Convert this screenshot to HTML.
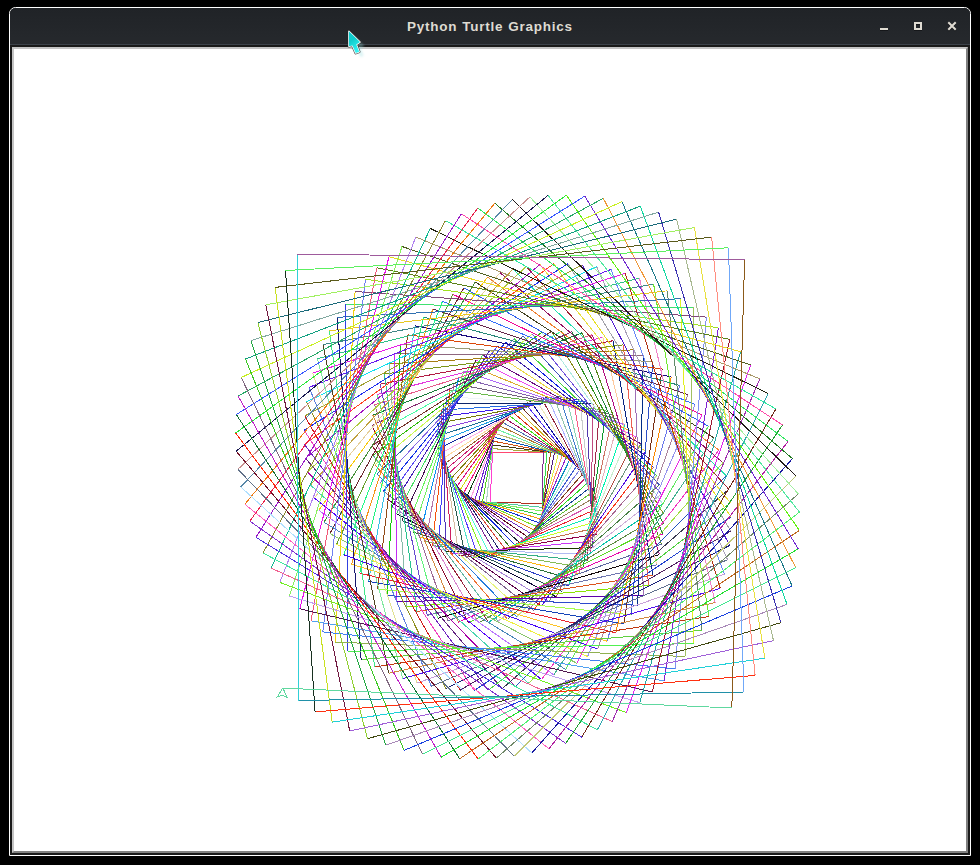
<!DOCTYPE html>
<html><head><meta charset="utf-8"><title>Python Turtle Graphics</title>
<style>
html,body{margin:0;padding:0;background:#000;}
body{width:980px;height:865px;position:relative;overflow:hidden;font-family:"Liberation Sans",sans-serif;}
.win{position:absolute;left:9px;top:7px;width:960px;height:847px;border:1px solid #fff;border-radius:6.5px 6.5px 0 0;background:#1a1a1a;overflow:hidden;}
.tb{position:absolute;left:0;top:0;width:960px;height:36px;background:linear-gradient(#202327,#26292d);}
.tbl{position:absolute;left:0;top:36px;width:960px;height:1px;background:#3c424a;}
.title{position:absolute;left:0;top:0;width:960px;height:36px;line-height:38px;text-align:center;color:#dfdbd2;font-weight:bold;font-size:13.5px;letter-spacing:0.75px;word-spacing:0.5px;}
.frame{position:absolute;left:2px;top:39px;width:952px;height:802px;border-style:solid;border-width:2px;border-color:#c4c4c4 #808080 #808080 #c4c4c4;background:#fff;}
.cv{position:absolute;left:0;top:0;}
.ic{position:absolute;}
</style></head><body>
<div class="win">
<div class="tb"></div><div class="tbl"></div>
<div class="title"><span id="tt">Python Turtle Graphics</span></div>
<svg class="ic" style="left:860px;top:8px" width="100" height="28" viewBox="870 16 100 28">
<g transform="translate(0,1)" opacity="0.6"><rect x="880" y="28" width="8" height="2" fill="#0c0d0f"/><rect x="915" y="23" width="6" height="6" fill="none" stroke="#0c0d0f" stroke-width="2"/><path d="M949 23L955 29M955 23L949 29" stroke="#0c0d0f" stroke-width="2" stroke-linecap="square" fill="none"/></g>
<rect x="880" y="28" width="8" height="2" fill="#dfdbd2"/>
<rect x="915" y="23" width="6" height="6" fill="none" stroke="#dfdbd2" stroke-width="2"/>
<path d="M949 23L955 29M955 23L949 29" stroke="#dfdbd2" stroke-width="2" stroke-linecap="square" fill="none"/>
</svg>
<div class="frame">
<svg class="cv" width="952" height="802" viewBox="14 49 952 802" shape-rendering="crispEdges" fill="none" stroke-width="1">
<path d="M492.9 452.4L543.2 452.4" stroke="#ff4870"/>
<path d="M543.2 452.4L542.4 503.7" stroke="#803090"/>
<path d="M542.4 503.7L490.2 502.0" stroke="#b03020"/>
<path d="M490.2 502.0L492.7 448.7" stroke="#ff40d0"/>
<path d="M492.7 448.7L546.9 452.2" stroke="#a8a840"/>
<path d="M546.9 452.2L542.5 507.3" stroke="#30e050"/>
<path d="M542.5 507.3L486.4 502.0" stroke="#50c8a0"/>
<path d="M486.4 502.0L492.8 445.0" stroke="#b0d0c8"/>
<path d="M492.8 445.0L550.7 452.4" stroke="#483810"/>
<path d="M550.7 452.4L542.2 511.1" stroke="#a05810"/>
<path d="M542.2 511.1L482.6 501.6" stroke="#80f060"/>
<path d="M482.6 501.6L493.3 441.2" stroke="#50d020"/>
<path d="M493.3 441.2L554.5 453.0" stroke="#d05010"/>
<path d="M554.5 453.0L541.5 515.0" stroke="#502080"/>
<path d="M541.5 515.0L478.8 500.8" stroke="#30d040"/>
<path d="M478.8 500.8L494.2 437.3" stroke="#5020c0"/>
<path d="M494.2 437.3L558.4 454.0" stroke="#0858b8"/>
<path d="M558.4 454.0L540.4 518.9" stroke="#e0f040"/>
<path d="M540.4 518.9L474.9 499.6" stroke="#f0a010"/>
<path d="M474.9 499.6L495.5 433.4" stroke="#7020d0"/>
<path d="M495.5 433.4L562.3 455.4" stroke="#b8b870"/>
<path d="M562.3 455.4L538.9 522.8" stroke="#ff9060"/>
<path d="M538.9 522.8L470.9 498.0" stroke="#1030d0"/>
<path d="M470.9 498.0L497.2 429.5" stroke="#ffa0e0"/>
<path d="M497.2 429.5L566.2 457.2" stroke="#70f0a0"/>
<path d="M566.2 457.2L537.0 526.7" stroke="#9020d0"/>
<path d="M537.0 526.7L467.1 496.0" stroke="#80e020"/>
<path d="M467.1 496.0L499.3 425.6" stroke="#104010"/>
<path d="M499.3 425.6L570.0 459.4" stroke="#b07830"/>
<path d="M570.0 459.4L534.7 530.5" stroke="#1090c0"/>
<path d="M534.7 530.5L463.3 493.6" stroke="#e08020"/>
<path d="M463.3 493.6L501.8 421.9" stroke="#f01880"/>
<path d="M501.8 421.9L573.8 462.0" stroke="#5070b0"/>
<path d="M573.8 462.0L532.0 534.2" stroke="#a0f0d0"/>
<path d="M532.0 534.2L459.6 490.8" stroke="#7030c0"/>
<path d="M459.6 490.8L504.7 418.2" stroke="#d0e010"/>
<path d="M504.7 418.2L577.4 465.0" stroke="#a01060"/>
<path d="M577.4 465.0L528.9 537.8" stroke="#4060d0"/>
<path d="M528.9 537.8L456.1 487.5" stroke="#600820"/>
<path d="M456.1 487.5L508.1 414.8" stroke="#e01080"/>
<path d="M508.1 414.8L580.8 468.5" stroke="#40e020"/>
<path d="M580.8 468.5L525.3 541.1" stroke="#8080e0"/>
<path d="M525.3 541.1L452.8 483.9" stroke="#a54dca"/>
<path d="M452.8 483.9L511.8 411.5" stroke="#c07010"/>
<path d="M511.8 411.5L584.0 472.3" stroke="#e03010"/>
<path d="M584.0 472.3L521.4 544.3" stroke="#804020"/>
<path d="M521.4 544.3L449.7 479.9" stroke="#182530"/>
<path d="M449.7 479.9L515.9 408.4" stroke="#808010"/>
<path d="M515.9 408.4L587.0 476.5" stroke="#d0b020"/>
<path d="M587.0 476.5L517.2 547.2" stroke="#bb1d6d"/>
<path d="M517.2 547.2L446.8 475.5" stroke="#132cde"/>
<path d="M446.8 475.5L520.3 405.6" stroke="#d6237b"/>
<path d="M520.3 405.6L589.7 481.0" stroke="#703020"/>
<path d="M589.7 481.0L512.5 549.9" stroke="#2ed91e"/>
<path d="M512.5 549.9L444.2 470.8" stroke="#3f721f"/>
<path d="M444.2 470.8L525.1 403.2" stroke="#cb1971"/>
<path d="M525.1 403.2L592.1 485.9" stroke="#5030f0"/>
<path d="M592.1 485.9L507.5 552.2" stroke="#174494"/>
<path d="M507.5 552.2L442.0 465.8" stroke="#d6493c"/>
<path d="M442.0 465.8L530.3 401.0" stroke="#9d5c34"/>
<path d="M530.3 401.0L594.2 491.1" stroke="#1010a0"/>
<path d="M594.2 491.1L502.2 554.2" stroke="#60be31"/>
<path d="M502.2 554.2L440.1 460.4" stroke="#201e69"/>
<path d="M440.1 460.4L535.7 399.2" stroke="#fedaa0"/>
<path d="M535.7 399.2L595.9 496.6" stroke="#eee8b9"/>
<path d="M595.9 496.6L496.7 555.7" stroke="#997f5c"/>
<path d="M496.7 555.7L438.6 454.7" stroke="#7c2999"/>
<path d="M438.6 454.7L541.4 397.8" stroke="#fdafe5"/>
<path d="M541.4 397.8L597.2 502.4" stroke="#93253c"/>
<path d="M597.2 502.4L490.8 556.9" stroke="#d654af"/>
<path d="M490.8 556.9L437.6 448.8" stroke="#4dfad7"/>
<path d="M437.6 448.8L547.4 396.9" stroke="#1427a0"/>
<path d="M547.4 396.9L598.0 508.4" stroke="#aeb3fe"/>
<path d="M598.0 508.4L484.8 557.7" stroke="#e9232f"/>
<path d="M484.8 557.7L436.9 442.7" stroke="#8af221"/>
<path d="M436.9 442.7L553.6 396.3" stroke="#1f9ee4"/>
<path d="M553.6 396.3L598.4 514.6" stroke="#91c5b1"/>
<path d="M598.4 514.6L478.5 558.0" stroke="#0becb5"/>
<path d="M478.5 558.0L436.8 436.4" stroke="#563bfc"/>
<path d="M436.8 436.4L559.9 396.3" stroke="#1e6f93"/>
<path d="M559.9 396.3L598.4 521.0" stroke="#427ecb"/>
<path d="M598.4 521.0L472.1 557.8" stroke="#c8fe29"/>
<path d="M472.1 557.8L437.1 429.9" stroke="#55e5cd"/>
<path d="M437.1 429.9L566.4 396.7" stroke="#8e46dc"/>
<path d="M566.4 396.7L597.8 527.6" stroke="#8ed4b7"/>
<path d="M597.8 527.6L465.5 557.1" stroke="#c2764d"/>
<path d="M465.5 557.1L437.9 423.3" stroke="#2a5a4d"/>
<path d="M437.9 423.3L573.0 397.7" stroke="#767706"/>
<path d="M573.0 397.7L596.7 534.2" stroke="#f85d86"/>
<path d="M596.7 534.2L458.8 555.9" stroke="#90024a"/>
<path d="M458.8 555.9L439.2 416.7" stroke="#d6bda3"/>
<path d="M439.2 416.7L579.7 399.2" stroke="#401be9"/>
<path d="M579.7 399.2L595.1 540.9" stroke="#c8cbcc"/>
<path d="M595.1 540.9L452.1 554.1" stroke="#c935f6"/>
<path d="M452.1 554.1L441.1 410.0" stroke="#cd1f61"/>
<path d="M441.1 410.0L586.4 401.2" stroke="#226ae1"/>
<path d="M586.4 401.2L593.0 547.6" stroke="#5338ae"/>
<path d="M593.0 547.6L445.4 551.8" stroke="#1a3400"/>
<path d="M445.4 551.8L443.5 403.3" stroke="#4d33ba"/>
<path d="M443.5 403.3L593.1 403.7" stroke="#0d246a"/>
<path d="M593.1 403.7L590.3 554.3" stroke="#c04c81"/>
<path d="M590.3 554.3L438.8 549.0" stroke="#b1baf2"/>
<path d="M438.8 549.0L446.5 396.6" stroke="#3e3bf9"/>
<path d="M446.5 396.6L599.8 406.8" stroke="#eef5f7"/>
<path d="M599.8 406.8L587.0 560.9" stroke="#9f2b49"/>
<path d="M587.0 560.9L432.2 545.6" stroke="#34af87"/>
<path d="M432.2 545.6L450.0 390.0" stroke="#f5520b"/>
<path d="M450.0 390.0L606.3 410.5" stroke="#69b94b"/>
<path d="M606.3 410.5L583.2 567.4" stroke="#0d982e"/>
<path d="M583.2 567.4L425.7 541.7" stroke="#85bb55"/>
<path d="M425.7 541.7L454.1 383.6" stroke="#b672a8"/>
<path d="M454.1 383.6L612.7 414.7" stroke="#72637a"/>
<path d="M612.7 414.7L578.8 573.8" stroke="#cd7466"/>
<path d="M578.8 573.8L419.4 537.2" stroke="#fcb60e"/>
<path d="M419.4 537.2L458.8 377.3" stroke="#0e8ff1"/>
<path d="M458.8 377.3L618.9 419.5" stroke="#8463b0"/>
<path d="M618.9 419.5L573.9 580.0" stroke="#e4b2ba"/>
<path d="M573.9 580.0L413.3 532.1" stroke="#297034"/>
<path d="M413.3 532.1L463.9 371.3" stroke="#74f064"/>
<path d="M463.9 371.3L624.9 424.8" stroke="#ac68f7"/>
<path d="M624.9 424.8L568.5 585.9" stroke="#00f5b0"/>
<path d="M568.5 585.9L407.4 526.5" stroke="#2b3dc6"/>
<path d="M407.4 526.5L469.7 365.5" stroke="#66f45b"/>
<path d="M469.7 365.5L630.6 430.7" stroke="#deaa2c"/>
<path d="M630.6 430.7L562.5 591.5" stroke="#caedcd"/>
<path d="M562.5 591.5L401.9 520.4" stroke="#2b5157"/>
<path d="M401.9 520.4L475.9 360.0" stroke="#410e4d"/>
<path d="M475.9 360.0L636.0 437.0" stroke="#ee4af2"/>
<path d="M636.0 437.0L556.0 596.8" stroke="#b34f43"/>
<path d="M556.0 596.8L396.7 513.8" stroke="#0a0734"/>
<path d="M396.7 513.8L482.6 354.9" stroke="#47de63"/>
<path d="M482.6 354.9L641.0 443.9" stroke="#6c0e80"/>
<path d="M641.0 443.9L549.0 601.7" stroke="#6c957b"/>
<path d="M549.0 601.7L391.8 506.7" stroke="#a684d6"/>
<path d="M391.8 506.7L489.9 350.2" stroke="#431fb5"/>
<path d="M489.9 350.2L645.6 451.2" stroke="#ead742"/>
<path d="M645.6 451.2L541.6 606.2" stroke="#4d09e1"/>
<path d="M541.6 606.2L387.4 499.1" stroke="#5d024c"/>
<path d="M387.4 499.1L497.5 345.9" stroke="#5848f2"/>
<path d="M497.5 345.9L649.8 459.0" stroke="#3d1fa6"/>
<path d="M649.8 459.0L533.7 610.3" stroke="#f7361d"/>
<path d="M533.7 610.3L383.5 491.1" stroke="#7f618d"/>
<path d="M383.5 491.1L505.7 342.1" stroke="#1532e7"/>
<path d="M505.7 342.1L653.5 467.3" stroke="#0e20e2"/>
<path d="M653.5 467.3L525.3 613.9" stroke="#a6668d"/>
<path d="M525.3 613.9L380.1 482.7" stroke="#e7f47e"/>
<path d="M380.1 482.7L514.2 338.8" stroke="#8467e5"/>
<path d="M514.2 338.8L656.7 475.9" stroke="#46d53e"/>
<path d="M656.7 475.9L516.6 616.9" stroke="#c8e2a1"/>
<path d="M516.6 616.9L377.2 473.9" stroke="#257bdb"/>
<path d="M377.2 473.9L523.1 336.0" stroke="#256c9b"/>
<path d="M523.1 336.0L659.3 484.9" stroke="#3e4fbb"/>
<path d="M659.3 484.9L507.5 619.3" stroke="#498146"/>
<path d="M507.5 619.3L374.9 464.7" stroke="#ef7030"/>
<path d="M374.9 464.7L532.3 333.9" stroke="#cbf953"/>
<path d="M532.3 333.9L661.3 494.2" stroke="#7252dc"/>
<path d="M661.3 494.2L498.1 621.2" stroke="#ceadd7"/>
<path d="M498.1 621.2L373.1 455.3" stroke="#64b6a3"/>
<path d="M373.1 455.3L541.9 332.3" stroke="#2fbb09"/>
<path d="M541.9 332.3L662.7 503.8" stroke="#adeae1"/>
<path d="M662.7 503.8L488.5 622.4" stroke="#09c4a9"/>
<path d="M488.5 622.4L372.1 445.5" stroke="#972039"/>
<path d="M372.1 445.5L551.7 331.4" stroke="#75352b"/>
<path d="M551.7 331.4L663.4 513.6" stroke="#878b14"/>
<path d="M663.4 513.6L478.6 623.0" stroke="#5c8a42"/>
<path d="M478.6 623.0L371.7 435.6" stroke="#d884cf"/>
<path d="M371.7 435.6L561.7 331.2" stroke="#4cfda7"/>
<path d="M561.7 331.2L663.5 523.7" stroke="#2d8e1d"/>
<path d="M663.5 523.7L468.5 622.9" stroke="#5dd925"/>
<path d="M468.5 622.9L371.9 425.5" stroke="#89082d"/>
<path d="M371.9 425.5L571.8 331.6" stroke="#852a71"/>
<path d="M571.8 331.6L662.9 533.9" stroke="#22873e"/>
<path d="M662.9 533.9L458.3 622.1" stroke="#e805ad"/>
<path d="M458.3 622.1L372.9 415.2" stroke="#d58942"/>
<path d="M372.9 415.2L582.1 332.8" stroke="#167a38"/>
<path d="M582.1 332.8L661.5 544.2" stroke="#528619"/>
<path d="M661.5 544.2L448.0 620.6" stroke="#5c679f"/>
<path d="M448.0 620.6L374.6 404.9" stroke="#9c6994"/>
<path d="M374.6 404.9L592.4 334.7" stroke="#e45b8a"/>
<path d="M592.4 334.7L659.4 554.5" stroke="#b10980"/>
<path d="M659.4 554.5L437.6 618.3" stroke="#120709"/>
<path d="M437.6 618.3L377.1 394.5" stroke="#61f37d"/>
<path d="M377.1 394.5L602.8 337.3" stroke="#e436dd"/>
<path d="M602.8 337.3L656.6 564.9" stroke="#fdc99d"/>
<path d="M656.6 564.9L427.2 615.3" stroke="#6e75af"/>
<path d="M427.2 615.3L380.3 384.2" stroke="#6547cf"/>
<path d="M380.3 384.2L613.1 340.7" stroke="#b11b42"/>
<path d="M613.1 340.7L653.0 575.2" stroke="#072482"/>
<path d="M653.0 575.2L417.0 611.5" stroke="#dc531c"/>
<path d="M417.0 611.5L384.3 373.9" stroke="#2bc390"/>
<path d="M384.3 373.9L623.3 344.9" stroke="#7c9617"/>
<path d="M623.3 344.9L648.7 585.4" stroke="#eb5e50"/>
<path d="M648.7 585.4L406.8 607.0" stroke="#89e401"/>
<path d="M406.8 607.0L389.0 363.8" stroke="#86baa8"/>
<path d="M389.0 363.8L633.4 349.8" stroke="#a57d11"/>
<path d="M633.4 349.8L643.6 595.4" stroke="#9e6fb6"/>
<path d="M643.6 595.4L396.8 601.7" stroke="#5d00ab"/>
<path d="M396.8 601.7L394.4 353.9" stroke="#c32af3"/>
<path d="M394.4 353.9L643.3 355.4" stroke="#8e667f"/>
<path d="M643.3 355.4L637.8 605.2" stroke="#022e87"/>
<path d="M637.8 605.2L387.1 595.7" stroke="#2d49cc"/>
<path d="M387.1 595.7L400.6 344.2" stroke="#15c90b"/>
<path d="M400.6 344.2L652.9 361.8" stroke="#999b77"/>
<path d="M652.9 361.8L631.2 614.8" stroke="#2b4fc7"/>
<path d="M631.2 614.8L377.6 588.9" stroke="#a6fd4c"/>
<path d="M377.6 588.9L407.6 334.8" stroke="#914a16"/>
<path d="M407.6 334.8L662.2 369.0" stroke="#db4708"/>
<path d="M662.2 369.0L623.9 624.0" stroke="#752b0f"/>
<path d="M623.9 624.0L368.5 581.4" stroke="#1544b8"/>
<path d="M368.5 581.4L415.3 325.8" stroke="#35c0e7"/>
<path d="M415.3 325.8L671.2 376.8" stroke="#19097d"/>
<path d="M671.2 376.8L615.8 632.8" stroke="#fa8701"/>
<path d="M615.8 632.8L359.7 573.2" stroke="#e9232f"/>
<path d="M359.7 573.2L423.7 317.1" stroke="#21f281"/>
<path d="M423.7 317.1L679.7 385.4" stroke="#268778"/>
<path d="M679.7 385.4L607.1 641.2" stroke="#6976eb"/>
<path d="M607.1 641.2L351.5 564.3" stroke="#fcc327"/>
<path d="M351.5 564.3L432.8 309.0" stroke="#f59317"/>
<path d="M432.8 309.0L687.7 394.7" stroke="#65274b"/>
<path d="M687.7 394.7L597.6 649.1" stroke="#a9829b"/>
<path d="M597.6 649.1L343.7 554.7" stroke="#4406f6"/>
<path d="M343.7 554.7L442.5 301.3" stroke="#1ff889"/>
<path d="M442.5 301.3L695.2 404.6" stroke="#326ffa"/>
<path d="M695.2 404.6L587.6 656.5" stroke="#9492ed"/>
<path d="M587.6 656.5L336.5 544.5" stroke="#eeee3c"/>
<path d="M336.5 544.5L452.9 294.3" stroke="#669f2b"/>
<path d="M452.9 294.3L702.1 415.1" stroke="#f20894"/>
<path d="M702.1 415.1L576.9 663.3" stroke="#ea27e6"/>
<path d="M576.9 663.3L329.9 533.6" stroke="#89c66b"/>
<path d="M329.9 533.6L463.9 287.8" stroke="#6b262e"/>
<path d="M463.9 287.8L708.4 426.2" stroke="#3060f0"/>
<path d="M708.4 426.2L565.6 669.4" stroke="#60e860"/>
<path d="M565.6 669.4L323.9 522.2" stroke="#4886b8"/>
<path d="M323.9 522.2L475.4 282.0" stroke="#438f39"/>
<path d="M475.4 282.0L714.0 437.9" stroke="#404020"/>
<path d="M714.0 437.9L553.8 674.8" stroke="#40b090"/>
<path d="M553.8 674.8L318.7 510.3" stroke="#ba76fe"/>
<path d="M318.7 510.3L487.5 277.0" stroke="#f8c90c"/>
<path d="M487.5 277.0L718.9 450.1" stroke="#f08030"/>
<path d="M718.9 450.1L541.5 679.5" stroke="#f030c0"/>
<path d="M541.5 679.5L314.2 497.9" stroke="#5101fb"/>
<path d="M314.2 497.9L500.0 272.7" stroke="#e6cf9a"/>
<path d="M500.0 272.7L723.0 462.7" stroke="#901060"/>
<path d="M723.0 462.7L528.8 683.4" stroke="#a0e040"/>
<path d="M528.8 683.4L310.4 485.0" stroke="#48d5b0"/>
<path d="M310.4 485.0L513.0 269.1" stroke="#c0a13d"/>
<path d="M513.0 269.1L726.3 475.8" stroke="#20e0b0"/>
<path d="M726.3 475.8L515.6 686.5" stroke="#2050c0"/>
<path d="M515.6 686.5L307.5 471.8" stroke="#a900a6"/>
<path d="M307.5 471.8L526.3 266.5" stroke="#adcb3d"/>
<path d="M526.3 266.5L728.8 489.2" stroke="#a02030"/>
<path d="M728.8 489.2L502.1 688.8" stroke="#383850"/>
<path d="M502.1 688.8L305.5 458.2" stroke="#602080"/>
<path d="M305.5 458.2L540.0 264.6" stroke="#a010c0"/>
<path d="M540.0 264.6L730.4 502.9" stroke="#e8e040"/>
<path d="M730.4 502.9L488.3 690.2" stroke="#50d040"/>
<path d="M488.3 690.2L304.4 444.3" stroke="#7020c0"/>
<path d="M304.4 444.3L553.9 263.7" stroke="#ff4020"/>
<path d="M553.9 263.7L731.1 516.9" stroke="#e8e020"/>
<path d="M731.1 516.9L474.3 690.6" stroke="#2040d0"/>
<path d="M474.3 690.6L304.1 430.3" stroke="#f040c0"/>
<path d="M304.1 430.3L568.0 263.7" stroke="#2030f0"/>
<path d="M568.0 263.7L730.9 531.1" stroke="#a0a0a8"/>
<path d="M730.9 531.1L460.1 690.2" stroke="#502060"/>
<path d="M460.1 690.2L304.8 416.0" stroke="#d01818"/>
<path d="M304.8 416.0L582.3 264.7" stroke="#a0a030"/>
<path d="M582.3 264.7L729.7 545.4" stroke="#5018d0"/>
<path d="M729.7 545.4L445.7 688.7" stroke="#182078"/>
<path d="M445.7 688.7L306.5 401.7" stroke="#909020"/>
<path d="M306.5 401.7L596.6 266.6" stroke="#10e0f0"/>
<path d="M596.6 266.6L727.5 559.7" stroke="#a8a0b8"/>
<path d="M727.5 559.7L431.4 686.4" stroke="#607090"/>
<path d="M431.4 686.4L309.1 387.3" stroke="#6080e0"/>
<path d="M309.1 387.3L611.0 269.4" stroke="#6818f0"/>
<path d="M611.0 269.4L724.4 574.1" stroke="#6888f8"/>
<path d="M724.4 574.1L417.0 683.0" stroke="#c8a0d8"/>
<path d="M417.0 683.0L312.7 373.0" stroke="#e0e090"/>
<path d="M312.7 373.0L625.3 273.3" stroke="#e818e8"/>
<path d="M625.3 273.3L720.3 588.4" stroke="#b03010"/>
<path d="M720.3 588.4L402.8 678.6" stroke="#5010f0"/>
<path d="M402.8 678.6L317.3 358.7" stroke="#80e8a0"/>
<path d="M317.3 358.7L639.5 278.2" stroke="#30c088"/>
<path d="M639.5 278.2L715.2 602.6" stroke="#f080c8"/>
<path d="M715.2 602.6L388.6 673.3" stroke="#d08840"/>
<path d="M388.6 673.3L322.9 344.6" stroke="#504020"/>
<path d="M322.9 344.6L653.6 284.0" stroke="#408888"/>
<path d="M653.6 284.0L709.1 616.5" stroke="#70e830"/>
<path d="M709.1 616.5L374.7 666.9" stroke="#c03810"/>
<path d="M374.7 666.9L329.5 330.8" stroke="#40e888"/>
<path d="M329.5 330.8L667.3 290.8" stroke="#e8c820"/>
<path d="M667.3 290.8L702.0 630.2" stroke="#608868"/>
<path d="M702.0 630.2L361.1 659.6" stroke="#60d040"/>
<path d="M361.1 659.6L337.1 317.3" stroke="#181870"/>
<path d="M337.1 317.3L680.7 298.7" stroke="#3070b0"/>
<path d="M680.7 298.7L694.0 643.5" stroke="#e0f020"/>
<path d="M694.0 643.5L347.9 651.3" stroke="#50f050"/>
<path d="M347.9 651.3L345.6 304.2" stroke="#3040e0"/>
<path d="M345.6 304.2L693.8 307.4" stroke="#40e070"/>
<path d="M693.8 307.4L685.0 656.5" stroke="#a0c060"/>
<path d="M685.0 656.5L335.1 642.1" stroke="#90b050"/>
<path d="M335.1 642.1L355.1 291.5" stroke="#f0d010"/>
<path d="M355.1 291.5L706.4 317.1" stroke="#804878"/>
<path d="M706.4 317.1L675.0 668.9" stroke="#8090f0"/>
<path d="M675.0 668.9L322.8 631.9" stroke="#4080f0"/>
<path d="M322.8 631.9L365.5 279.3" stroke="#7080f0"/>
<path d="M365.5 279.3L718.4 327.8" stroke="#a0e020"/>
<path d="M718.4 327.8L664.1 680.8" stroke="#8020d0"/>
<path d="M664.1 680.8L311.0 620.8" stroke="#50a0f0"/>
<path d="M311.0 620.8L376.8 267.7" stroke="#f05878"/>
<path d="M376.8 267.7L729.8 339.3" stroke="#5a8018"/>
<path d="M729.8 339.3L652.4 692.1" stroke="#a01830"/>
<path d="M652.4 692.1L299.9 608.8" stroke="#501850"/>
<path d="M299.9 608.8L389.0 256.7" stroke="#e810e8"/>
<path d="M389.0 256.7L740.6 351.7" stroke="#e8d820"/>
<path d="M740.6 351.7L639.8 702.7" stroke="#20a8a0"/>
<path d="M639.8 702.7L289.5 596.0" stroke="#c0a0f0"/>
<path d="M289.5 596.0L402.0 246.5" stroke="#88f060"/>
<path d="M402.0 246.5L750.7 364.9" stroke="#506020"/>
<path d="M750.7 364.9L626.4 712.6" stroke="#e020f0"/>
<path d="M626.4 712.6L279.8 582.4" stroke="#70f020"/>
<path d="M279.8 582.4L415.8 237.0" stroke="#b080f0"/>
<path d="M415.8 237.0L759.9 378.9" stroke="#a89868"/>
<path d="M759.9 378.9L612.2 721.6" stroke="#a030b0"/>
<path d="M612.2 721.6L271.0 568.1" stroke="#f06090"/>
<path d="M271.0 568.1L430.3 228.4" stroke="#10b890"/>
<path d="M430.3 228.4L768.4 393.6" stroke="#202010"/>
<path d="M768.4 393.6L597.4 729.8" stroke="#30a8b0"/>
<path d="M597.4 729.8L263.0 553.0" stroke="#40e8a0"/>
<path d="M263.0 553.0L445.5 220.6" stroke="#8a8830"/>
<path d="M445.5 220.6L775.9 408.9" stroke="#30e8a0"/>
<path d="M775.9 408.9L581.8 737.1" stroke="#702818"/>
<path d="M581.8 737.1L255.9 537.3" stroke="#5030e0"/>
<path d="M255.9 537.3L461.4 213.8" stroke="#9818c8"/>
<path d="M461.4 213.8L782.5 425.0" stroke="#ff48a8"/>
<path d="M782.5 425.0L565.7 743.4" stroke="#20a030"/>
<path d="M565.7 743.4L249.8 521.1" stroke="#8030d0"/>
<path d="M249.8 521.1L477.8 208.0" stroke="#e8204a"/>
<path d="M477.8 208.0L788.0 441.5" stroke="#30e860"/>
<path d="M788.0 441.5L549.0 748.8" stroke="#b020a0"/>
<path d="M549.0 748.8L244.8 504.2" stroke="#ff60c0"/>
<path d="M244.8 504.2L494.8 203.2" stroke="#f07810"/>
<path d="M494.8 203.2L792.5 458.6" stroke="#207820"/>
<path d="M792.5 458.6L531.8 753.0" stroke="#1818a0"/>
<path d="M531.8 753.0L240.8 486.9" stroke="#b0e0ff"/>
<path d="M240.8 486.9L512.2 199.5" stroke="#5888a8"/>
<path d="M512.2 199.5L796.0 476.1" stroke="#201818"/>
<path d="M796.0 476.1L514.2 756.2" stroke="#c0c878"/>
<path d="M514.2 756.2L237.9 469.3" stroke="#607088"/>
<path d="M237.9 469.3L529.9 196.9" stroke="#c89090"/>
<path d="M529.9 196.9L798.3 493.9" stroke="#a0f0a0"/>
<path d="M798.3 493.9L496.3 758.2" stroke="#708868"/>
<path d="M496.3 758.2L236.2 451.2" stroke="#701028"/>
<path d="M236.2 451.2L548.0 195.4" stroke="#181850"/>
<path d="M548.0 195.4L799.5 512.1" stroke="#50e8a0"/>
<path d="M799.5 512.1L478.1 759.1" stroke="#50f070"/>
<path d="M478.1 759.1L235.6 433.0" stroke="#ff2808"/>
<path d="M235.6 433.0L566.3 195.2" stroke="#28e838"/>
<path d="M566.3 195.2L799.4 530.4" stroke="#60f010"/>
<path d="M799.4 530.4L459.7 758.7" stroke="#c06820"/>
<path d="M459.7 758.7L236.3 414.5" stroke="#107030"/>
<path d="M236.3 414.5L584.8 196.1" stroke="#3858ff"/>
<path d="M584.8 196.1L798.2 548.9" stroke="#7028d0"/>
<path d="M798.2 548.9L441.1 757.2" stroke="#20e030"/>
<path d="M441.1 757.2L238.1 396.0" stroke="#c020c8"/>
<path d="M238.1 396.0L603.3 198.3" stroke="#28a868"/>
<path d="M603.3 198.3L795.7 567.5" stroke="#f09838"/>
<path d="M795.7 567.5L422.6 754.4" stroke="#40e890"/>
<path d="M422.6 754.4L241.2 377.5" stroke="#806880"/>
<path d="M241.2 377.5L621.9 201.6" stroke="#c8f020"/>
<path d="M621.9 201.6L792.1 586.0" stroke="#1a7888"/>
<path d="M792.1 586.0L404.1 750.4" stroke="#1840e0"/>
<path d="M404.1 750.4L245.5 359.0" stroke="#38c820"/>
<path d="M245.5 359.0L640.3 206.2" stroke="#10a080"/>
<path d="M640.3 206.2L787.1 604.4" stroke="#10d8a0"/>
<path d="M787.1 604.4L385.7 745.2" stroke="#a888b8"/>
<path d="M385.7 745.2L251.0 340.6" stroke="#20a840"/>
<path d="M251.0 340.6L658.6 212.1" stroke="#80a8a0"/>
<path d="M658.6 212.1L780.9 622.7" stroke="#3a30b0"/>
<path d="M780.9 622.7L367.5 738.7" stroke="#404810"/>
<path d="M367.5 738.7L257.8 322.5" stroke="#90d030"/>
<path d="M257.8 322.5L676.7 219.2" stroke="#1a6a7a"/>
<path d="M676.7 219.2L773.5 640.6" stroke="#a8b890"/>
<path d="M773.5 640.6L349.7 731.0" stroke="#a060d8"/>
<path d="M349.7 731.0L265.8 304.8" stroke="#701840"/>
<path d="M265.8 304.8L694.4 227.5" stroke="#a0f060"/>
<path d="M694.4 227.5L764.9 658.2" stroke="#e8e040"/>
<path d="M764.9 658.2L332.2 722.1" stroke="#20d0d8"/>
<path d="M332.2 722.1L275.1 287.4" stroke="#c8e020"/>
<path d="M275.1 287.4L711.6 237.1" stroke="#5a5a1a"/>
<path d="M711.6 237.1L755.1 675.4" stroke="#ff8e80"/>
<path d="M755.1 675.4L315.1 711.9" stroke="#ff3010"/>
<path d="M315.1 711.9L285.5 270.5" stroke="#183020"/>
<path d="M285.5 270.5L728.4 247.8" stroke="#5cf060"/>
<path d="M728.4 247.8L744.0 692.0" stroke="#70a8f8"/>
<path d="M744.0 692.0L298.7 700.6" stroke="#2090a8"/>
<path d="M298.7 700.6L297.1 254.1" stroke="#30d0d8"/>
<path d="M297.1 254.1L744.6 259.7" stroke="#9e5a9c"/>
<path d="M744.6 259.7L731.8 708.0" stroke="#8b5a1a"/>
<path d="M731.8 708.0L282.8 688.1" stroke="#60d8a0"/>
<polygon points="282.8,688.1 277.3,696.8 282.4,695.1 287.3,697.4" fill="#fff" stroke="#60d8a0"/>
</svg>
</div>
</div>
<svg style="position:absolute;left:340px;top:24px;overflow:visible" width="40" height="40" viewBox="340 24 40 40">
<defs><linearGradient id="cg" x1="0" y1="0" x2="0.35" y2="1"><stop offset="0.45" stop-color="#10cccd"/><stop offset="1" stop-color="#34f3f3"/></linearGradient>
<filter id="sh" x="-50%" y="-50%" width="200%" height="200%"><feGaussianBlur stdDeviation="1.2"/></filter></defs>
<path d="M348.9 31.2L348.9 46.3L352.4 45.5L355.8 53.1L359.2 51.8L356.3 44.5L360 42.1Z" transform="translate(4.5,4)" fill="#9adfe0" opacity="0.35" filter="url(#sh)"/>
<path d="M348.9 31.2L348.9 46.3L352.4 45.5L355.8 53.1L359.2 51.8L356.3 44.5L360 42.1Z" fill="#222" stroke="#222" stroke-opacity="0.85" stroke-width="2.6" stroke-linejoin="round"/>
<path d="M348.9 31.2L348.9 46.3L352.4 45.5L355.8 53.1L359.2 51.8L356.3 44.5L360 42.1Z" fill="url(#cg)" stroke="#fff" stroke-width="1.5" stroke-linejoin="round" paint-order="stroke"/>
</svg>
</body></html>
